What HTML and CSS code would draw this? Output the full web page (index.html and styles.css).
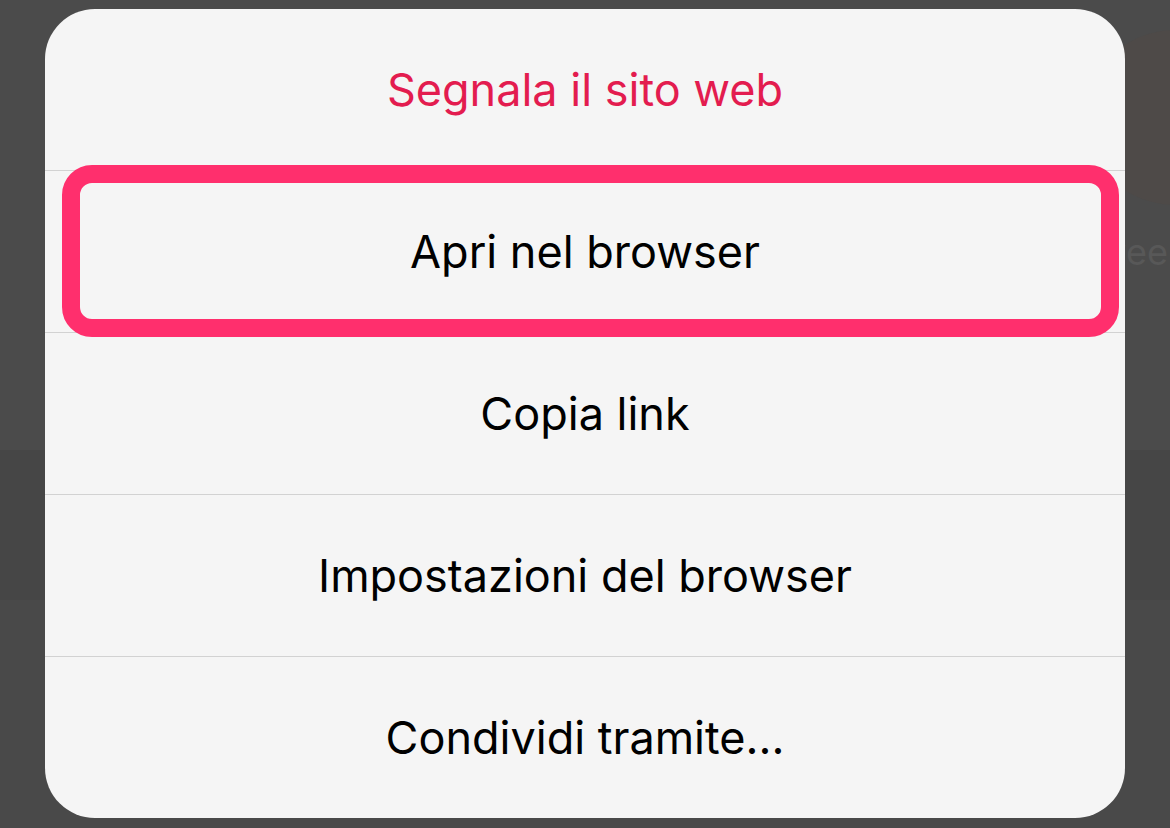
FILE: index.html
```html
<!DOCTYPE html>
<html lang="it">
<head>
    <meta charset="UTF-8">
    <title>Azioni</title>
    <link rel="stylesheet" href="styles.css">
</head>
<body>
    <div class="backdrop">
        <div class="band band-top"></div>
        <div class="band band-mid"></div>
        <div class="band band-low"></div>
        <div class="avatar"></div>
        <span class="peek">Twee</span>
    </div>

    <div class="sheet">
        <div class="row title">Segnala il sito web</div>
        <div class="row">Apri nel browser</div>
        <div class="row">Copia link</div>
        <div class="row">Impostazioni del browser</div>
        <div class="row">Condividi tramite...</div>

        <!-- annotation around "Apri nel browser" -->
        <div class="highlight"></div>
    </div>
</body>
</html>
```

FILE: styles.css
```css
body {
    margin: 0;
    width: 1170px;
    height: 828px;
    overflow: hidden;
    background: #494949;
    font-family: Inter, 'Noto Sans', sans-serif;
    position: relative;
}
.backdrop {
    position: absolute;
    inset: 0;
    overflow: hidden;
    display: flex;
    flex-direction: column;
}
.band-top {
    height: 450px;
    background: #4b4b4b;
}
.band-mid {
    height: 150px;
    background: #464646;
}
.band-low {
    flex: 1;
    background: #494949;
}
.avatar {
    position: absolute;
    left: 1085px;
    top: 30px;
    width: 180px;
    height: 175px;
    border-radius: 50%;
    background: #4e4a48;
}
.peek {
    position: absolute;
    right: 2px;
    top: 230px;
    font-size: 36px;
    color: #585858;
}
.sheet {
    position: relative;
    margin: 9px 0 0 45px;
    width: 1080px;
    height: 809px;
    background: #f5f5f5;
    border-radius: 50px;
    display: flex;
    flex-direction: column;
}
.row {
    height: 161px;
    display: flex;
    align-items: center;
    justify-content: center;
    font-size: 45px;
    color: #000;
    border-top: 1px solid #d2d2d2;
}
.row.title {
    border-top: none;
    color: #e31c4f;
}
.highlight {
    position: absolute;
    left: 17px;
    top: 156px;
    width: 1021px;
    height: 136px;
    border: 18px solid #ff2f6d;
    border-radius: 30px;
}
```
